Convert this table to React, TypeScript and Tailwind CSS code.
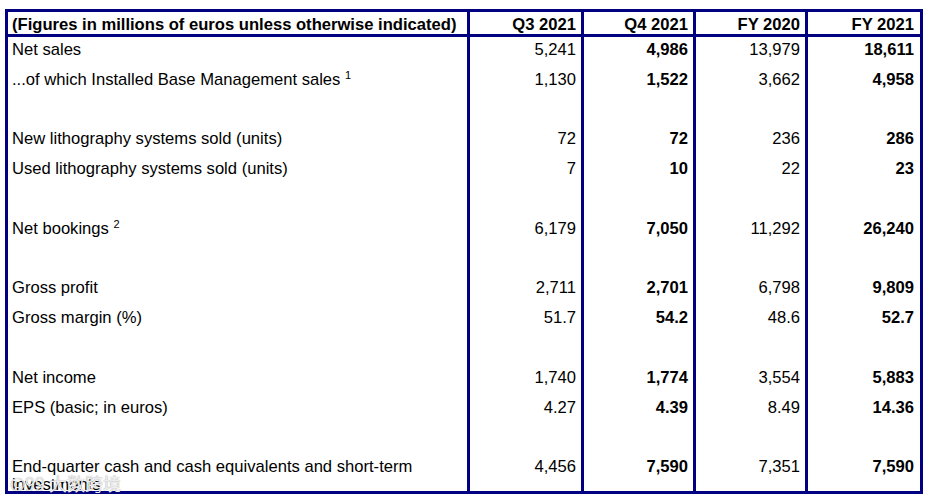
import React from "react";

type Row = {
  label?: React.ReactNode;
  v?: [string, string, string, string];
  h?: string;
};

const rows: Row[] = [
  { label: "Net sales", v: ["5,241", "4,986", "13,979", "18,611"] },
  {
    label: (
      <>
        ...of which Installed Base Management sales <sup className="text-[11px]">1</sup>
      </>
    ),
    v: ["1,130", "1,522", "3,662", "4,958"],
  },
  {},
  { label: "New lithography systems sold (units)", v: ["72", "72", "236", "286"] },
  { label: "Used lithography systems sold (units)", v: ["7", "10", "22", "23"] },
  {},
  {
    label: (
      <>
        Net bookings <sup className="text-[11px]">2</sup>
      </>
    ),
    v: ["6,179", "7,050", "11,292", "26,240"],
  },
  {},
  { label: "Gross profit", v: ["2,711", "2,701", "6,798", "9,809"] },
  { label: "Gross margin (%)", v: ["51.7", "54.2", "48.6", "52.7"] },
  {},
  { label: "Net income", v: ["1,740", "1,774", "3,554", "5,883"] },
  { label: "EPS (basic; in euros)", v: ["4.27", "4.39", "8.49", "14.36"] },
  {},
  {
    label: "End-quarter cash and cash equivalents and short-term investments",
    v: ["4,456", "7,590", "7,351", "7,590"],
    h: "last",
  },
];

const colW = ["w-[459px]", "w-[114px]", "w-[112px]", "w-[112px]", "w-[115px]"];

export default function App() {
  return (
    <div
      className="w-[927px] h-[500px] bg-white relative overflow-hidden text-black"
      style={{ fontFamily: '"Liberation Sans", Arial, sans-serif' }}
    >
      <div className="ml-[5px] mt-[9px] w-[918px] border-[3px] border-[#000080]">
        {/* header */}
        <div className="flex h-[25px] border-b-[3px] border-[#000080] font-bold text-[16.6px] leading-[18px]">
          <div className="w-[459px] pl-[4px] pt-[4px] whitespace-nowrap">
            (Figures in millions of euros unless otherwise indicated)
          </div>
          <div className="w-[114px] border-l-[3px] border-[#000080] pr-[5px] pt-[4px] text-right">Q3 2021</div>
          <div className="w-[112px] border-l-[3px] border-[#000080] pr-[5px] pt-[4px] text-right">Q4 2021</div>
          <div className="w-[112px] border-l-[3px] border-[#000080] pr-[5px] pt-[4px] text-right">FY 2020</div>
          <div className="w-[115px] border-l-[3px] border-[#000080] pr-[6px] pt-[4px] text-right">FY 2021</div>
        </div>
        {/* body */}
        <div className="flex flex-col text-[16.6px] leading-[18px]">
          {rows.map((r, i) => (
            <div
              key={i}
              className={"flex " + (r.h === "last" ? "h-[37px]" : "h-[29.8px]")}
            >
              <div className="w-[459px] pl-[4px] pt-[4px] pr-[40px]">{r.label}</div>
              {[0, 1, 2, 3].map((c) => (
                <div
                  key={c}
                  className={
                    colW[c + 1] +
                    " border-l-[3px] border-[#000080] pt-[4px] text-right " +
                    (c === 3 ? "pr-[6px] " : "pr-[5px] ") +
                    (c === 1 || c === 3 ? "font-bold" : "")
                  }
                >
                  {r.v ? r.v[c] : ""}
                </div>
              ))}
            </div>
          ))}
        </div>
      </div>
      <div
        className="absolute left-[10px] top-[472px] text-[18px] leading-[22px] text-[#eeeeee] whitespace-nowrap"
        style={{ fontFamily: '"Noto Sans CJK SC", sans-serif', textShadow: "0 0 1px rgba(0,0,0,0.45)" }}
      >
        ©99 大数跨境
      </div>
    </div>
  );
}
